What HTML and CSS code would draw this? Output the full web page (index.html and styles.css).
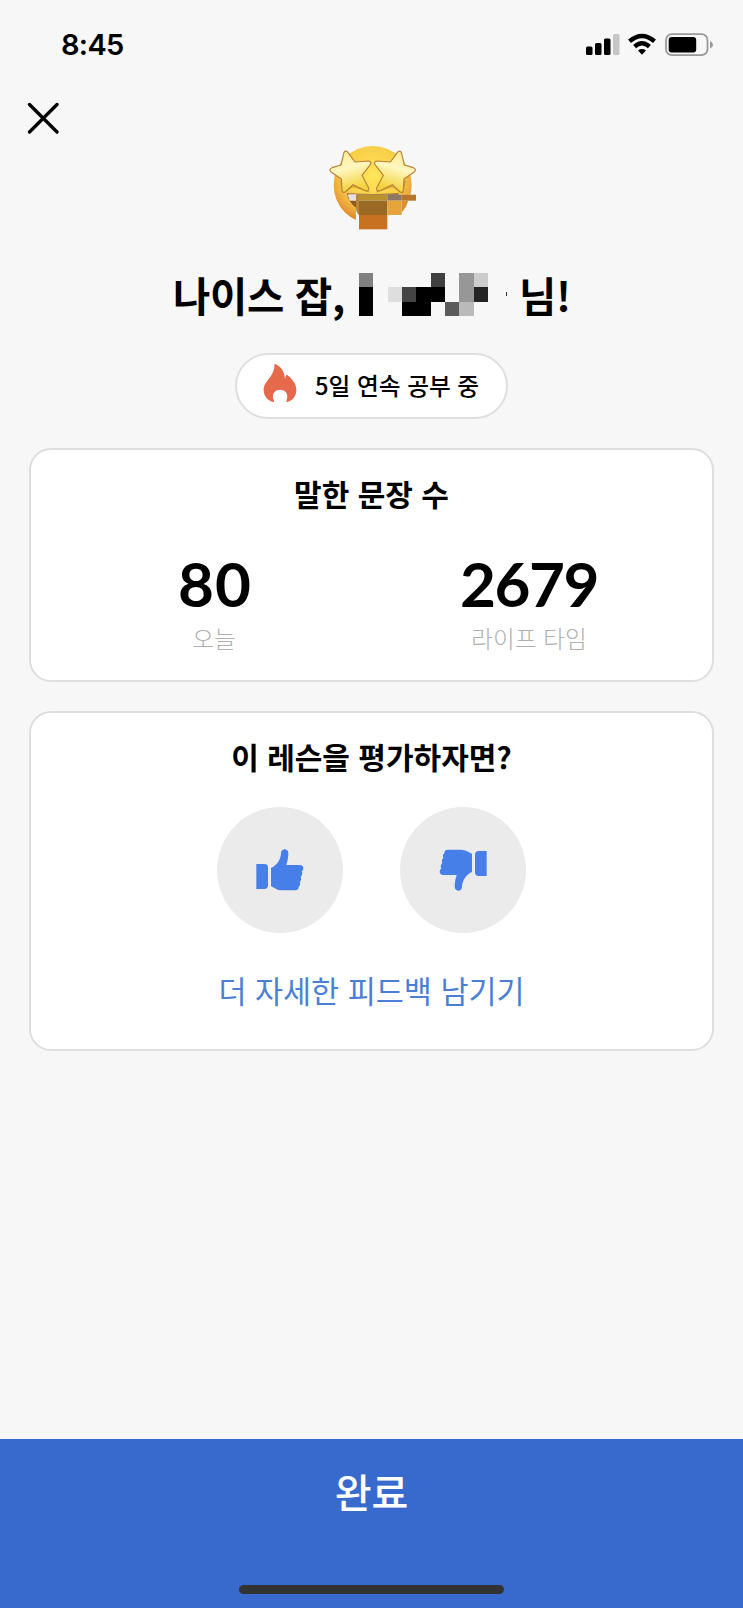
FILE: index.html
```html
<!DOCTYPE html>
<html lang="ko">
<head>
  <meta charset="UTF-8" />
  <meta name="viewport" content="width=device-width, initial-scale=1.0"/>
  <title>레슨 완료</title>
  <link rel="stylesheet" href="styles.css">
</head>
<body>
  <div class="screen">
    <header class="status-bar">
      <span class="time">8:45</span>
      <svg class="status-icons" width="128" height="24" viewBox="0 0 128 24">
        <rect x="0" y="13.5" width="6.5" height="8.5" rx="1.5"/>
        <rect x="9" y="10" width="6.5" height="12" rx="1.5"/>
        <rect x="18" y="5.5" width="6.5" height="16.5" rx="1.5"/>
        <rect x="27" y="1" width="6.5" height="21" rx="1.5" fill="#c6c6c6"/>
        <g fill="none" stroke="#000" stroke-width="4.400">
          <path d="M43.500 8.300Q56 -2.300 68.500 8.300"/>
          <path d="M48.600 13.600Q56 7 63.400 13.600"/>
        </g>
        <path d="M52 17.500Q56 14.600 60 17.500L56 21.700Z"/>
        <rect x="80" y="1.200" width="41.500" height="21" rx="6" fill="none" stroke="#999" stroke-width="1.800"/>
        <rect x="82.700" y="4" width="27.500" height="15.500" rx="3"/>
        <path d="M124 8Q127 9.500 127 11.700Q127 14 124 15.500Z" fill="#999"/>
      </svg>
    </header>

    <button class="close" aria-label="닫기">
      <svg width="32" height="32" viewBox="0 0 32 32" fill="none" stroke="#000" stroke-width="3.300" stroke-linecap="round">
        <path d="M2.500 2.500L30 30M30 2.500L2.500 30"/>
      </svg>
    </button>

    <svg class="emoji" width="130" height="90" viewBox="0 0 390 270">
      <defs>
        <radialGradient id="face" cx="50%" cy="38%" r="62%">
          <stop offset="0" stop-color="#ffe65a"/>
          <stop offset="0.600" stop-color="#f8ce48"/>
          <stop offset="0.850" stop-color="#eba33a"/>
          <stop offset="1" stop-color="#d98222"/>
        </radialGradient>
        <linearGradient id="star" x1="0" y1="0" x2="0.300" y2="1">
          <stop offset="0" stop-color="#ffe88a"/>
          <stop offset="0.500" stop-color="#fff7c0"/>
          <stop offset="1" stop-color="#f3d33d"/>
        </linearGradient>
      </defs>
      <circle cx="188" cy="135" r="117" fill="url(#face)"/>
      <path d="M110 160Q188 164 266 160Q264 216 188 216Q124 216 110 160Z" fill="#8b5b20"/>
      <path d="M113 163H140V182H119Z" fill="#e6e2df"/>
      <g fill="#a8641e" opacity="0.400">
        <path d="M99 160L90 128L165 135L180 158L129 142Z"/>
        <path d="M197 158L212 130L288 122L280 160L247 142Z"/>
      </g>
      <g fill="url(#star)" stroke="#b98238" stroke-width="3.500" stroke-linejoin="round">
        <path id="eye" d="M102 37Q108 29 114 38L135 66L175 63Q186 65 181 74L156 106L176 144Q177 155 166 152L129 134L106 156Q97 160 96 150L94 117L62 95Q56 87 66 83L93 75Z"/>
        <use href="#eye" transform="translate(376) scale(-1 1)"/>
      </g>
      <path d="M138 164H330V270H138Z" fill="#f7f7f7"/>
      <path d="M138 164H147V225Q138 218 138 205Z" fill="#b98534"/>
      <path d="M147 164H232V182H147Z" fill="#bb9130"/>
      <path d="M232 164H275V182H232Z" fill="#8d7762"/>
      <path d="M275 164H318V182H275Z" fill="#b87527"/>
      <path d="M147 182H232V225H147Z" fill="#9b6a22"/>
      <path d="M232 182H275V225H232Z" fill="#e7a43c"/>
      <path d="M275 182H295Q289 203 275 218Z" fill="#dc9030"/>
      <path d="M147 225H232V268H147Z" fill="#c87121"/>
    </svg>

    <h1 class="title">
      <span>나이스 잡,</span>
      <svg class="name" width="150" height="43" viewBox="0 0 150 43" shape-rendering="crispEdges">
        <path d="M0 14.300H14.300V43H0Z"/>
        <path d="M57.300 14.300H86V28.700H71.700V43H43V28.700H57.300Z"/>
        <path d="M0 0H14.300V14.300H0Z" fill="#808080"/>
        <path d="M71.700 0H86V14.300H71.700Z" fill="#404040"/>
        <path d="M100.300 0H114.700V28.700H100.300Z" fill="#979797"/>
        <path d="M114.700 0H129V14.300H114.700Z" fill="#cdcdcd"/>
        <path d="M28.700 14.300H43V28.700H28.700Z" fill="#dedede"/>
        <path d="M43 14.300H57.300V28.700H43Z" fill="#444"/>
        <path d="M114.700 14.300H129V28.700H114.700Z" fill="#242424"/>
        <path d="M86 28.700H100.300V43H86Z" fill="#5c5c5c"/>
        <path d="M100.300 28.700H114.700V43H100.300Z" fill="#bababa"/>
        <path d="M147 19H148V23H147Z" fill="#333"/>
      </svg>
      <span>님!</span>
    </h1>

    <div class="streak">
      <svg width="34" height="40" viewBox="0 0 102 120" fill="#e5694a">
        <path d="M34 2C50 7 65 22 66 48C68 44 66 39 71 35C83 43 100 59 100 80C100 99 88 114 71 117C69 116 70 114 71 111C78 92 66 80 51 80C35 80 25 93 32 111C34 114 34 117 32 117C14 113 2 99 2 80C2 53 38 38 34 2Z"/>
      </svg>
      <span>5일 연속 공부 중</span>
    </div>

    <section class="card sentences">
      <h2>말한 문장 수</h2>
      <div class="stats">
        <div class="stat">
          <strong class="today">80</strong>
          <span>오늘</span>
        </div>
        <div class="stat">
          <strong>2679</strong>
          <span>라이프 타임</span>
        </div>
      </div>
    </section>

    <section class="card rating">
      <h2>이 레슨을 평가하자면?</h2>
      <div class="votes">
        <button class="vote" aria-label="좋아요">
          <svg width="48" height="42" viewBox="0 0 144 126">
            <path d="M1 45H25Q36 45 36 56V109Q36 120 25 120H1Z"/>
            <path d="M45 57C62 49 74 34 75 12Q76 1 87 1Q98 2 97 17Q96 34 91 48H131Q142 49 142 58Q142 65 137 67Q142 75 134 84Q138 93 131 100Q135 108 128 113Q129 123 117 124H78Q64 124 54 116L45 112Z"/>
          </svg>
        </button>
        <button class="vote down" aria-label="싫어요">
          <svg width="48" height="42" viewBox="0 0 144 126">
            <path d="M1 45H25Q36 45 36 56V109Q36 120 25 120H1Z"/>
            <path d="M45 57C62 49 74 34 75 12Q76 1 87 1Q98 2 97 17Q96 34 91 48H131Q142 49 142 58Q142 65 137 67Q142 75 134 84Q138 93 131 100Q135 108 128 113Q129 123 117 124H78Q64 124 54 116L45 112Z"/>
          </svg>
        </button>
      </div>
      <a class="feedback">더 자세한 피드백 남기기</a>
    </section>

    <footer class="done">
      <span>완료</span>
      <div class="home-bar"></div>
    </footer>
  </div>
</body>
</html>
```
FILE: styles.css
```css
* {
  box-sizing: border-box;
}
body {
  margin: 0;
  font-family: "Noto Sans CJK KR", sans-serif;
  background: #f7f7f7;
  color: #000;
}
h1, h2 {
  margin: 0;
}
button {
  padding: 0;
  border: 0;
  background: none;
}
svg {
  display: block;
  flex-shrink: 0;
}
.screen {
  display: flex;
  flex-direction: column;
  align-items: center;
  width: 743px;
  height: 1608px;
}
.status-bar {
  display: flex;
  justify-content: space-between;
  align-items: flex-start;
  width: 100%;
  height: 102px;
  padding: 33px 29px 0 61px;
}
.time {
  font: 600 29px/24px Inter, sans-serif;
  letter-spacing: -0.7px;
}
.close {
  align-self: flex-start;
  height: 32px;
  margin-left: 27px;
}
.emoji {
  margin: 6px 0 0 7px;
}
.title {
  display: flex;
  width: 100%;
  height: 60px;
  margin-top: 35px;
  padding-left: 173px;
  font-size: 40.5px;
  font-weight: 700;
  letter-spacing: -0.3px;
  line-height: 60px;
  white-space: nowrap;
}
.title span:first-child {
  width: 186px;
}
.name {
  margin: 8px 10px 0 0;
}
.streak {
  display: flex;
  align-items: center;
  width: 273px;
  height: 66px;
  margin-top: 28px;
  padding: 0 0 3px 26px;
  gap: 18px;
  border: 2px solid #dedede;
  border-radius: 33px;
  background: #fff;
  font-size: 23.7px;
  font-weight: 500;
  white-space: nowrap;
}
.streak svg {
  margin-top: -4px;
}
.card {
  display: flex;
  flex-direction: column;
  align-items: center;
  width: 685px;
  border: 2px solid #dedede;
  border-radius: 22px;
  background: #fff;
}
.card h2 {
  font-size: 30px;
  font-weight: 700;
  line-height: 40px;
}
.sentences {
  height: 234px;
  margin-top: 29px;
  padding-top: 23px;
}
.stats {
  display: grid;
  grid-template-columns: 315px 315px;
  margin-top: 40px;
}
.stat {
  display: flex;
  flex-direction: column;
  align-items: center;
}
.stat strong {
  font: 700 62px/60px Lato, sans-serif;
  letter-spacing: -1.5px;
}
.stat .today {
  margin-left: 2px;
  letter-spacing: 1px;
}
.stat span {
  margin-top: 7px;
  color: #b0b0b0;
  font-size: 23.7px;
  font-weight: 300;
  line-height: 36px;
}
.rating {
  height: 340px;
  margin-top: 29px;
  padding-top: 23px;
}
.votes {
  display: flex;
  gap: 57px;
  margin-top: 31px;
}
.vote {
  display: flex;
  align-items: center;
  justify-content: center;
  width: 126px;
  height: 126px;
  border-radius: 50%;
  background: #ebebeb;
  fill: #467fe8;
}
.down svg {
  transform: rotate(180deg);
}
.feedback {
  margin-top: 35px;
  color: #4b7fd6;
  font-size: 30.5px;
  line-height: 44px;
}
.done {
  display: flex;
  flex-direction: column;
  align-items: center;
  justify-content: space-between;
  width: 100%;
  height: 169px;
  margin-top: auto;
  padding: 22px 0 14px;
  background: #386acd;
  color: #fff;
  font-size: 40px;
  font-weight: 500;
  line-height: 60px;
}
.home-bar {
  width: 265px;
  height: 9px;
  border-radius: 5px;
  background: #333;
}
```
